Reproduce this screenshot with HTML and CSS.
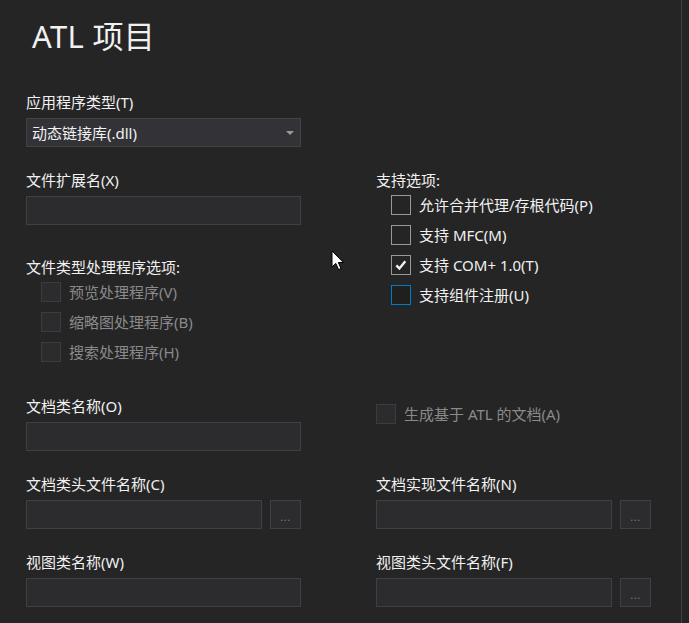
FILE: index.html
```html
<!DOCTYPE html>
<html lang="zh-CN">
<head>
<meta charset="utf-8">
<title>ATL 项目</title>
<link rel="stylesheet" href="styles.css">
</head>
<body>
<div class="page">
  <h1 class="title">ATL 项目</h1>

  <div class="row row-a">
    <div class="col">
      <div class="label">应用程序类型(T)</div>
      <div class="combo">
        <span class="combo-text">动态链接库(.dll)</span>
        <span class="combo-arrow"></span>
      </div>
    </div>
  </div>

  <div class="row row-b">
    <div class="col">
      <div class="label">文件扩展名(X)</div>
      <div class="input"></div>

      <div class="group group-c">
        <div class="label">文件类型处理程序选项:</div>
        <div class="check indent disabled"><span class="box"></span><span class="ctext">预览处理程序(V)</span></div>
        <div class="check indent disabled"><span class="box"></span><span class="ctext">缩略图处理程序(B)</span></div>
        <div class="check indent disabled"><span class="box"></span><span class="ctext">搜索处理程序(H)</span></div>
      </div>
    </div>
    <div class="col">
      <div class="label">支持选项:</div>
      <div class="check indent"><span class="box"></span><span class="ctext">允许合并代理/存根代码(P)</span></div>
      <div class="check indent"><span class="box"></span><span class="ctext">支持 MFC(M)</span></div>
      <div class="check indent"><span class="box checked"><svg viewBox="0 0 20 20" width="18" height="18"><path d="M4.8 10.4 L8.2 13.8 L14.8 5.8" fill="none" stroke="#f1f1f1" stroke-width="2.6"/></svg></span><span class="ctext">支持 COM+ 1.0(T)</span></div>
      <div class="check indent"><span class="box focus"></span><span class="ctext">支持组件注册(U)</span></div>
    </div>
  </div>

  <div class="row row-d">
    <div class="col">
      <div class="label">文档类名称(O)</div>
      <div class="input"></div>
    </div>
    <div class="col">
      <div class="check disabled check-d"><span class="box"></span><span class="ctext">生成基于 ATL 的文档(A)</span></div>
    </div>
  </div>

  <div class="row row-e">
    <div class="col">
      <div class="label">文档类头文件名称(C)</div>
      <div class="input-row"><div class="input grow"></div><div class="browse">...</div></div>
    </div>
    <div class="col">
      <div class="label">文档实现文件名称(N)</div>
      <div class="input-row"><div class="input grow"></div><div class="browse">...</div></div>
    </div>
  </div>

  <div class="row row-e">
    <div class="col">
      <div class="label">视图类名称(W)</div>
      <div class="input"></div>
    </div>
    <div class="col">
      <div class="label">视图类头文件名称(F)</div>
      <div class="input-row"><div class="input grow"></div><div class="browse">...</div></div>
    </div>
  </div>

  <svg class="cursor" width="14" height="22" viewBox="0 0 14 22">
    <path d="M1 1 L1 17 L4.8 13.4 L7.6 19.6 L10 18.5 L7.3 12.5 L12.4 12.5 Z" fill="#ffffff" stroke="#000000" stroke-width="1"/>
  </svg>
</div>
</body>
</html>
```

FILE: styles.css
```css
* { box-sizing: border-box; }

html, body {
  margin: 0;
  padding: 0;
  background: #252526;
  height: 100%;
}

body {
  font-family: "Noto Sans", "Noto Sans CJK SC", sans-serif;
  font-size: 15px;
  color: #f1f1f1;
  overflow: hidden;
}

.page {
  position: relative;
  width: 682px;
  height: 623px;
  border-right: 1px solid #3f3f46;
  padding-left: 26px;
  padding-top: 16px;
}

.title {
  margin: 0;
  padding-left: 6px;
  font-size: 31px;
  font-weight: 400;
  line-height: 40px;
  color: #f1f1f1;
  letter-spacing: 0.3px;
}

.row {
  display: flex;
  gap: 75px;
}

.col {
  width: 275px;
  display: flex;
  flex-direction: column;
}

.row-a { margin-top: 36px; }
.row-b { margin-top: 23px; }
.row-d { margin-top: 29px; }
.row-e { margin-top: 23px; }

.label {
  height: 20px;
  line-height: 21px;
  margin-bottom: 6px;
  white-space: nowrap;
}

.group-c { margin-top: 32px; }
.group-c .label { margin-bottom: 0; }
.col > .label + .check { margin-top: -6px; }

.combo {
  height: 29px;
  background: #333337;
  border: 1px solid #434346;
  display: flex;
  align-items: center;
  justify-content: space-between;
  padding: 0 5px 0 5px;
}

.combo-text {
  line-height: 20px;
  color: #f1f1f1;
}

.combo-arrow {
  width: 0;
  height: 0;
  border-left: 4px solid transparent;
  border-right: 4px solid transparent;
  border-top: 4px solid #999999;
  margin-right: 1px;
}

.input {
  height: 29px;
  background: #2c2c2f;
  border: 1px solid #3f3f46;
}

.input-row {
  display: flex;
  gap: 8px;
}

.grow { flex: 1; }

.browse {
  width: 31px;
  height: 29px;
  background: #2c2c2f;
  border: 1px solid #3f3f46;
  color: #7a7a7a;
  font-size: 11px;
  line-height: 32px;
  text-align: center;
  letter-spacing: 0.5px;
}

.check {
  height: 30px;
  display: flex;
  align-items: center;
  gap: 8px;
  white-space: nowrap;
}

.check.indent { padding-left: 15px; }

.box {
  width: 20px;
  height: 20px;
  border: 1px solid #999999;
  display: flex;
  align-items: center;
  justify-content: center;
  flex: none;
}

.box.focus {
  border-color: #007acc;
  background: #1f1f20;
}

.box svg { display: block; }

.disabled .box {
  border-color: #3c3c3f;
  background: #2c2c2e;
}

.disabled .ctext { color: #8a8a8a; }

.ctext { line-height: 21px; }

.check-d { margin-top: 3px; }

.cursor {
  position: absolute;
  left: 331px;
  top: 250px;
}
```
